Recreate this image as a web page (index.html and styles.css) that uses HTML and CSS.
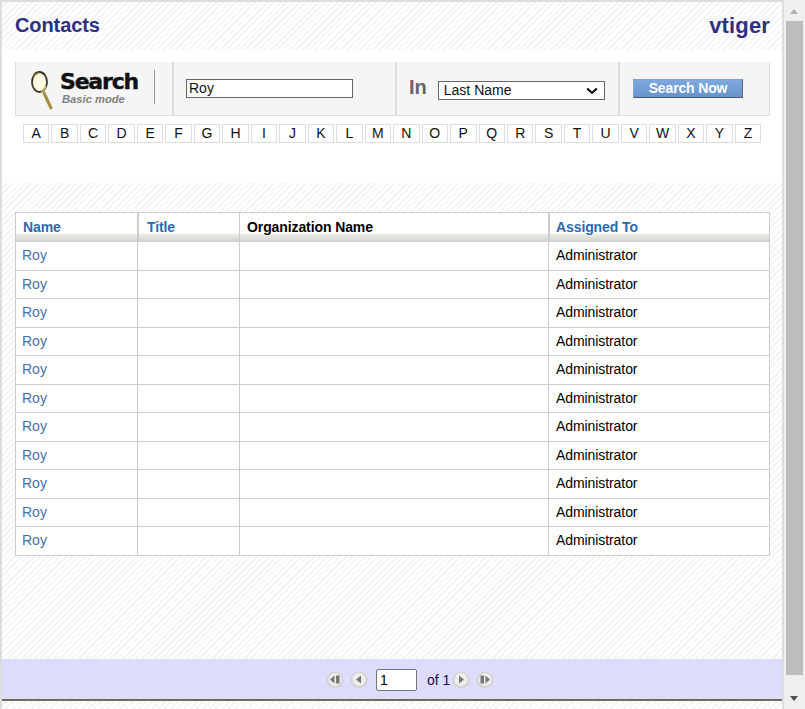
FILE: index.html
```html
<!DOCTYPE html>
<html lang="en">
<head>
<meta charset="utf-8">
<title>Contacts</title>
<link rel="stylesheet" href="styles.css">
</head>
<body>
<div class="page">
  <main class="frame">
    <header class="top pattern">
      <h1 class="title">Contacts</h1>
      <div class="brand">vtiger</div>
    </header>
    <section class="searcharea">
      <form class="searchbox">
        <div class="cell logo">
          <svg class="glass" width="28" height="42" viewBox="0 0 28 42" aria-hidden="true">
            <line x1="14" y1="24" x2="21" y2="39" stroke="#a88d3c" stroke-width="3" stroke-linecap="round"/>
            <ellipse cx="9.5" cy="13" rx="7.5" ry="10" fill="#fdfbe6" stroke="#3a3420" stroke-width="1.8"/>
            <path d="M4 8a8 10 0 0 1 5-4" fill="none" stroke="#bfa550" stroke-width="1.5"/>
            <path d="M16 17a8 10 0 0 1-5 5.5" fill="none" stroke="#c9ae58" stroke-width="1.5"/>
          </svg>
          <div class="logotext">
            <div class="logomain">Search</div>
            <div class="logosub">Basic mode</div>
          </div>
          <div class="logorule"></div>
        </div>
        <div class="cell query"><input class="queryinput" type="text" value="Roy"></div>
        <div class="cell field">
          <span class="inlabel">In</span>
          <select class="fieldselect"><option>Last Name</option></select>
        </div>
        <div class="cell action"><button class="searchbtn" type="button">Search Now</button></div>
      </form>
      <nav class="alpha">
        <a>A</a><a>B</a><a>C</a><a>D</a><a>E</a><a>F</a><a>G</a><a>H</a><a>I</a><a>J</a><a>K</a><a>L</a><a>M</a><a>N</a><a>O</a><a>P</a><a>Q</a><a>R</a><a>S</a><a>T</a><a>U</a><a>V</a><a>W</a><a>X</a><a>Y</a><a>Z</a>
      </nav>
    </section>
    <section class="results pattern">
      <div class="grid">
        <div class="row head">
          <div class="c c1 link">Name</div><div class="c c2 link">Title</div><div class="c c3">Organization Name</div><div class="c c4 link">Assigned To</div>
        </div>
        <div class="row"><div class="c c1 link">Roy</div><div class="c c2"></div><div class="c c3"></div><div class="c c4">Administrator</div></div>
        <div class="row"><div class="c c1 link">Roy</div><div class="c c2"></div><div class="c c3"></div><div class="c c4">Administrator</div></div>
        <div class="row"><div class="c c1 link">Roy</div><div class="c c2"></div><div class="c c3"></div><div class="c c4">Administrator</div></div>
        <div class="row"><div class="c c1 link">Roy</div><div class="c c2"></div><div class="c c3"></div><div class="c c4">Administrator</div></div>
        <div class="row"><div class="c c1 link">Roy</div><div class="c c2"></div><div class="c c3"></div><div class="c c4">Administrator</div></div>
        <div class="row"><div class="c c1 link">Roy</div><div class="c c2"></div><div class="c c3"></div><div class="c c4">Administrator</div></div>
        <div class="row"><div class="c c1 link">Roy</div><div class="c c2"></div><div class="c c3"></div><div class="c c4">Administrator</div></div>
        <div class="row"><div class="c c1 link">Roy</div><div class="c c2"></div><div class="c c3"></div><div class="c c4">Administrator</div></div>
        <div class="row"><div class="c c1 link">Roy</div><div class="c c2"></div><div class="c c3"></div><div class="c c4">Administrator</div></div>
        <div class="row"><div class="c c1 link">Roy</div><div class="c c2"></div><div class="c c3"></div><div class="c c4">Administrator</div></div>
        <div class="row"><div class="c c1 link">Roy</div><div class="c c2"></div><div class="c c3"></div><div class="c c4">Administrator</div></div>
      </div>
    </section>
    <footer class="pager">
      <svg class="pbtn" width="18" height="18" viewBox="0 0 18 18" aria-hidden="true"><circle cx="9" cy="9" r="8.5" fill="#d4d4d4"/><circle cx="9" cy="8.5" r="6.5" fill="#eee"/><path d="M8.5 4.5v8L4 8.5z" fill="#777"/><rect x="10" y="4.5" width="3.5" height="8" fill="#777"/></svg>
      <svg class="pbtn second" width="18" height="18" viewBox="0 0 18 18" aria-hidden="true"><circle cx="9" cy="9" r="8.5" fill="#d4d4d4"/><circle cx="9" cy="8.5" r="6.5" fill="#eee"/><path d="M11 4.5v8L6 8.5z" fill="#777"/></svg>
      <input class="pageinput" type="text" value="1">
      <span class="pagecount">of 1</span>
      <svg class="pbtn" width="18" height="18" viewBox="0 0 18 18" aria-hidden="true"><circle cx="9" cy="9" r="8.5" fill="#d4d4d4"/><circle cx="9" cy="8.5" r="6.5" fill="#eee"/><path d="M7 4.5v8l5-4z" fill="#777"/></svg>
      <svg class="pbtn second" width="18" height="18" viewBox="0 0 18 18" aria-hidden="true"><circle cx="9" cy="9" r="8.5" fill="#d4d4d4"/><circle cx="9" cy="8.5" r="6.5" fill="#eee"/><rect x="4.5" y="4.5" width="3.5" height="8" fill="#777"/><path d="M9.5 4.5v8l4.5-4z" fill="#777"/></svg>
    </footer>
    <div class="tail pattern"></div>
  </main>
  <aside class="scrollbar">
    <div class="arrow up"></div>
    <div class="thumb"></div>
    <div class="arrow down"></div>
  </aside>
</div>
</body>
</html>
```

FILE: styles.css
```css
* { box-sizing: border-box; }
html, body { margin: 0; height: 100%; overflow: hidden; }
body { font-family: "Liberation Sans", Arial, sans-serif; font-size: 14px; color: #000; background: #fff; }

.page { display: flex; width: 805px; height: 709px; }
.frame { width: 784px; height: 709px; display: flex; flex-direction: column; border: 2px solid #ddd; border-bottom: 0; background: #fff; }

.pattern { background: repeating-linear-gradient(135deg, #fff 0, #fff 2.5px, #f5f5f5 2.5px, #f5f5f5 4.5px); }

.top { height: 48px; flex: none; display: flex; justify-content: space-between; align-items: flex-start; padding: 11px 12px 0 13px; }
.title { margin: 0; font-size: 20px; line-height: 24px; font-weight: bold; color: #2f2f85; letter-spacing: -0.1px; }
.brand { font-size: 22px; line-height: 26px; font-weight: bold; color: #2f2f85; letter-spacing: 0.15px; }

.searcharea { height: 133px; flex: none; padding: 12px 12px 0 13px; }
.searchbox { display: flex; height: 54px; background: #f5f5f5; border: solid #ddd; border-width: 0 1px 1px 1px; }
.cell { display: flex; align-items: center; border-right: 2px solid #ddd; }
.logo { width: 158px; position: relative; padding-left: 14px; }
.glass { flex: none; margin-top: 3px; }
.logotext { margin-left: 2px; margin-top: -2px; }
.logomain { font-family: "DejaVu Sans", sans-serif; font-weight: bold; font-size: 22px; line-height: 24px; letter-spacing: -1.2px; color: #111; -webkit-text-stroke: 0.4px #111; }
.logosub { font-weight: bold; font-style: italic; font-size: 11.2px; line-height: 11px; margin-left: 2px; color: #808080; }
.logorule { position: absolute; left: 138px; top: 8px; width: 1px; height: 34px; background: #999; }
.query { width: 223px; padding-left: 12px; }
.queryinput { width: 167px; height: 19px; border: 1px solid #666; padding: 0 2px 2px; font: 14px "Liberation Sans", Arial, sans-serif; background: #fff; color: #111; }
.field { width: 223px; padding-left: 12px; }
.inlabel { font-size: 20px; font-weight: bold; color: #666; margin-right: 11px; margin-top: -2px; }
.fieldselect { appearance: none; -webkit-appearance: none; width: 167px; height: 19px; margin-top: 4px; border: 1px solid #666; border-radius: 0; padding: 0 0 2px 5px; font: 14px "Liberation Sans", Arial, sans-serif; color: #111; background: #fff url("data:image/svg+xml,%3Csvg xmlns='http://www.w3.org/2000/svg' width='12' height='8' viewBox='0 0 12 8'%3E%3Cpath d='M1.2 1.5 6 6l4.8-4.5' fill='none' stroke='%23000' stroke-width='2'/%3E%3C/svg%3E") no-repeat right 6px center; }
.action { flex: 1; border-right: 0; padding-left: 13px; }
.searchbtn { width: 110px; height: 19px; padding: 0 0 2px; border: solid #7ba4d8; border-width: 1px; border-right-color: #666; border-bottom-color: #555; background: linear-gradient(#7fa9dd, #6593cf); color: #fff; font: bold 14px "Liberation Sans", Arial, sans-serif; letter-spacing: -0.15px; }

.alpha { display: flex; gap: 2px; margin: 8px 9px 0 8px; }
.alpha a { flex: 1; height: 19px; line-height: 17px; text-align: center; border: 1px solid #ddd; background: #fff; color: #111; font-size: 14px; }

.results { flex: 1; padding: 29px 13px 0 13px; }
.grid { width: 755px; border: solid #ccc; border-width: 1px 1px 0 1px; background: #fff; }
.row { display: grid; grid-template-columns: 122px 102px 309px 1fr; height: 28.55px; border-bottom: 1px solid #ccc; }
.head { height: 29px; border-bottom: 0; font-weight: bold; letter-spacing: -0.1px; background: linear-gradient(#fff 0, #fff 20px, #ecece8 21px, #d8d8d4 27px, #ccc 29px); }
.c { border-right: 1px solid #ccc; padding: 5px 0 0 6px; line-height: 17px; }
.c4 { border-right: 0; padding-left: 7px; letter-spacing: -0.08px; }
.head .c { padding: 6px 0 0 7px; }
.head .c2 { padding-left: 8px; border-left: 1px solid #ccc; }
.head .c4 { border-right: 0; padding-left: 6px; border-left: 1px solid #ccc; letter-spacing: -0.1px; }
.link { color: #4272b0; }
.head .link { color: #2f67ae; }

.pager { height: 42px; flex: none; display: flex; align-items: center; padding: 2px 0 0 324px; background: #ddddfb; border-bottom: 2px solid #6b6b5e; }
.pbtn { flex: none; }
.second { margin-left: 6px; }
.pageinput { width: 41px; height: 22px; margin: 0 10px 0 8px; padding: 0 3px; border: 1px solid #767676; border-radius: 2px; font: 14px "Liberation Sans", Arial, sans-serif; background: #fff; }
.pagecount { color: #1a0a55; margin-right: 2px; }
.tail { height: 8px; flex: none; }

.scrollbar { flex: 1; position: relative; background: #efefef; }
.thumb { position: absolute; left: 2px; top: 21px; width: 17px; height: 654px; background: #bdbdbd; }
.arrow { position: absolute; left: 6px; width: 0; height: 0; border-left: 4.5px solid transparent; border-right: 4.5px solid transparent; }
.up { top: 9px; border-bottom: 5px solid #b0b0b0; }
.down { bottom: 8px; border-top: 5px solid #505050; }
```
